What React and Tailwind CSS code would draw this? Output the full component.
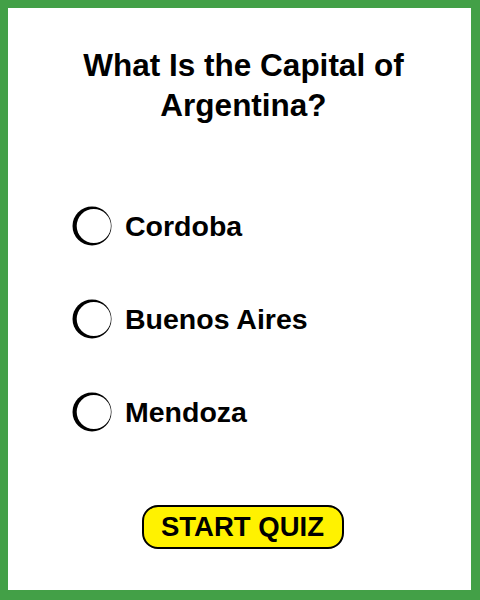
import React from "react";

const options = ["Cordoba", "Buenos Aires", "Mendoza"];

// hollow radio ring, heavier on the left edge like a hand-inked circle
const Ring = () => (
  <svg width="40" height="40" viewBox="0 0 40 40" className="shrink-0">
    <circle cx="20" cy="20" r="19.5" fill="#000" />
    <circle cx="21.8" cy="20" r="17.1" fill="#fff" />
  </svg>
);

const App = () => {
  return (
    <div
      className="w-[480px] h-[600px] bg-[#43a047] pt-2 pl-2 pr-[9px] pb-[10px]"
      style={{ fontFamily: '"Liberation Sans", Arial, sans-serif' }}
    >
      <div className="h-full bg-white flex flex-col">
        {/* Question */}
        <h1 className="pt-[37px] pl-2 text-center text-[31.5px] leading-[40px] font-bold text-black">
          What Is the Capital of
          <br />
          Argentina?
        </h1>

        {/* Answers */}
        <div className="mt-[81px] flex flex-col gap-[53px] pl-[64px]">
          {options.map((opt) => (
            <div key={opt} className="flex items-center gap-[13px] h-10">
              <Ring />
              <span className="text-[28.5px] font-bold text-black leading-none">
                {opt}
              </span>
            </div>
          ))}
        </div>

        {/* Start button */}
        <div className="mt-[73px] flex justify-center">
          <button className="w-[202px] h-[44px] ml-[6px] rounded-[16px] border-[2.5px] border-black bg-[#fff200] text-[27.5px] font-bold text-black leading-none">
            START QUIZ
          </button>
        </div>
      </div>
    </div>
  );
};

export default App;
